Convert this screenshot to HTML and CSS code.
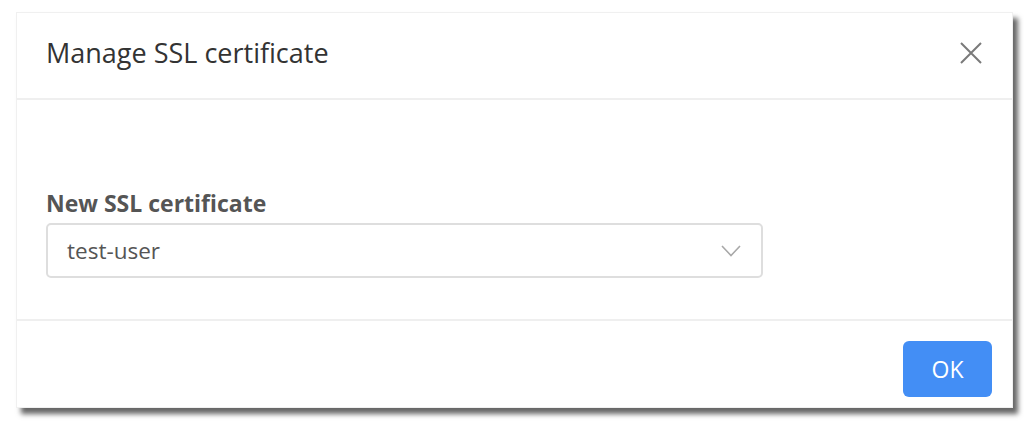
FILE: index.html
```html
<!DOCTYPE html>
<html>
<head>
<meta charset="utf-8">
<link rel="stylesheet" href="styles.css">
</head>
<body>
<div class="page">
  <div class="modal">
    <div class="modal-header">
      <h1 class="modal-title">Manage SSL certificate</h1>
      <button class="close-btn" aria-label="Close">
        <svg width="22" height="22" viewBox="0 0 22 22"><path d="M1 1L21 21M21 1L1 21" stroke="#7a7a7a" stroke-width="2" fill="none"/></svg>
      </button>
    </div>
    <div class="modal-body">
      <label class="field-label">New SSL certificate</label>
      <div class="select">
        <span class="select-value">test-user</span>
        <svg class="chevron" width="20" height="12" viewBox="0 0 20 12"><path d="M1 1L10 10.5L19 1" stroke="#a8a8a8" stroke-width="1.6" fill="none"/></svg>
      </div>
    </div>
    <div class="modal-footer">
      <button class="ok-btn">OK</button>
    </div>
  </div>
</div>
</body>
</html>
```
FILE: styles.css
```css
html, body {
  margin: 0;
  padding: 0;
  width: 1024px;
  height: 424px;
  overflow: hidden;
  background: #ffffff;
}
body {
  font-family: "Open Sans", "Noto Sans", sans-serif;
}
.page {
  width: 1024px;
  height: 424px;
  box-sizing: border-box;
  padding: 12px 0 0 16px;
  background: #ffffff;
}
.modal {
  width: 997px;
  height: 396px;
  box-sizing: border-box;
  background: #fff;
  border: 1px solid #f0f0f0;
  display: flex;
  flex-direction: column;
  box-shadow: 5px 6px 5px rgba(0, 0, 0, 0.6);
}
.modal-header {
  height: 87px;
  box-sizing: border-box;
  border-bottom: 2px solid #efefef;
  display: flex;
  align-items: center;
  justify-content: space-between;
  padding: 0 30px 6px 29px;
}
.modal-title {
  margin: 0;
  font-size: 27px;
  font-weight: 400;
  color: #333;
}
.close-btn {
  border: 0;
  background: none;
  padding: 0;
  display: flex;
}
.modal-body {
  height: 221px;
  box-sizing: border-box;
  padding: 90px 0 0 29px;
  border-bottom: 2px solid #efefef;
}
.field-label {
  display: block;
  font-size: 23px;
  font-weight: 700;
  color: #555;
  line-height: 26px;
  margin-bottom: 7px;
}
.select {
  width: 717px;
  height: 55px;
  box-sizing: border-box;
  border: 2px solid #dedede;
  border-radius: 5px;
  display: flex;
  align-items: center;
  justify-content: space-between;
  padding: 0 20px 0 19px;
}
.select-value {
  font-size: 22.5px;
  color: #555;
}
.modal-footer {
  flex: 1;
  display: flex;
  justify-content: flex-end;
  align-items: flex-start;
  padding: 20px 20px 0;
}
.ok-btn {
  width: 89px;
  height: 56px;
  border: 0;
  border-radius: 6px;
  background: #438ef5;
  color: #fff;
  font-family: "Open Sans", "Noto Sans", sans-serif;
  font-size: 23px;
}
```
